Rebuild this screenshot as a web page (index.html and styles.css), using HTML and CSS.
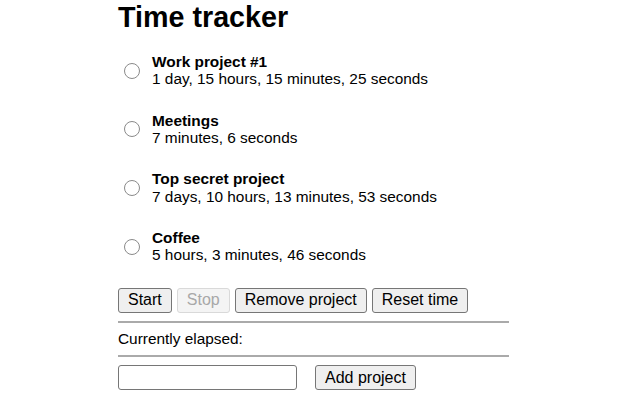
FILE: index.html
```html
<!DOCTYPE html>
<html>
<head>
<meta charset="utf-8">
<link rel="stylesheet" href="styles.css">
</head>
<body>
<div class="app">
  <h1 class="title">Time tracker</h1>
  <ul class="projects">
    <li class="project"><span class="radio"></span><div class="info"><div class="name">Work project #1</div><div class="time">1 day, 15 hours, 15 minutes, 25 seconds</div></div></li>
    <li class="project"><span class="radio"></span><div class="info"><div class="name">Meetings</div><div class="time">7 minutes, 6 seconds</div></div></li>
    <li class="project"><span class="radio"></span><div class="info"><div class="name">Top secret project</div><div class="time">7 days, 10 hours, 13 minutes, 53 seconds</div></div></li>
    <li class="project"><span class="radio"></span><div class="info"><div class="name">Coffee</div><div class="time">5 hours, 3 minutes, 46 seconds</div></div></li>
  </ul>
  <div class="controls">
    <button class="btn btn-start">Start</button>
    <button class="btn btn-stop" disabled>Stop</button>
    <button class="btn btn-remove">Remove project</button>
    <button class="btn btn-reset">Reset time</button>
  </div>
  <hr class="rule">
  <div class="elapsed">Currently elapsed:</div>
  <hr class="rule rule-second">
  <div class="add">
    <input class="field" type="text">
    <button class="btn btn-add">Add project</button>
  </div>
</div>
</body>
</html>
```
FILE: styles.css
```css
html, body {
  margin: 0;
  padding: 0;
  background: #fff;
}
body {
  font-family: "Liberation Sans", Arial, sans-serif;
  color: #000;
}
.app {
  width: 391px;
  padding-left: 118px;
}
.title {
  margin: 0;
  height: 41px;
  font-size: 28.7px;
  line-height: 34px;
  font-weight: bold;
}
.projects {
  list-style: none;
  margin: 0;
  padding: 0;
}
.project {
  display: flex;
  align-items: center;
  height: 58.67px;
}
.radio {
  box-sizing: border-box;
  width: 16px;
  height: 16px;
  border: 1px solid #8a8a8a;
  border-radius: 50%;
  margin-left: 5.5px;
  margin-right: 12.5px;
  margin-top: 1px;
  flex: none;
}
.info {
  font-size: 15.4px;
  line-height: 17.33px;
  color: #000;
}
.name {
  font-weight: bold;
}
.controls {
  display: flex;
  gap: 5px;
  margin-top: 12px;
}
.btn {
  box-sizing: border-box;
  font-family: "Liberation Sans", Arial, sans-serif;
  font-size: 16px;
  height: 25px;
  padding: 0 9px;
  border: 1px solid #767676;
  border-radius: 3px;
  background: #efefef;
  color: #000;
}
.btn-stop {
  color: #a8a8a8;
  border-color: #d9d9d9;
  background: #f4f4f4;
}
.rule {
  margin: 8px 0 0;
  border: 0;
  border-top: 2px solid #aaaaaa;
  height: 0;
}
.elapsed {
  font-size: 15.4px;
  line-height: 17.33px;
  padding: 7.7px 0 7px;
  color: #000;
}
.rule-second {
  margin-top: 0;
}
.add {
  display: flex;
  gap: 18px;
  margin-top: 8.5px;
}
.field {
  box-sizing: border-box;
  width: 179px;
  height: 25px;
  border: 1px solid #767676;
  border-radius: 3px;
  background: #fff;
}
```
